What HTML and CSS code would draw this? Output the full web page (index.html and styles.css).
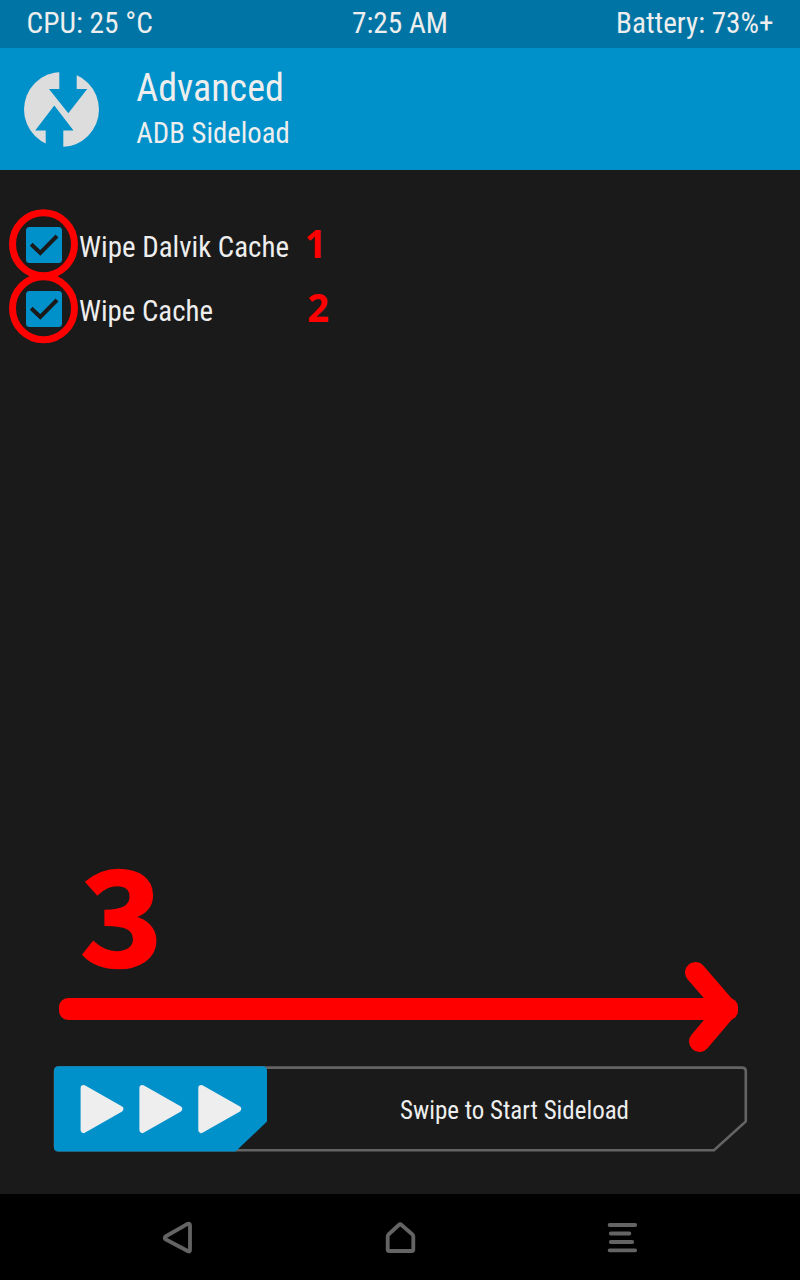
FILE: index.html
```html
<!DOCTYPE html>
<html lang="en">
<head>
<meta charset="utf-8">
<title>ADB Sideload</title>
<link rel="stylesheet" href="styles.css">
</head>
<body>
<div class="screen">
  <header class="status">
    <svg class="label" width="128" height="48"><text x="0.5" y="33" textLength="126.5" lengthAdjust="spacingAndGlyphs">CPU: 25 °C</text></svg>
    <svg class="label" width="97" height="48"><text x="0" y="33" textLength="96" lengthAdjust="spacingAndGlyphs">7:25 AM</text></svg>
    <svg class="label" width="158" height="48"><text x="0" y="33" textLength="157.5" lengthAdjust="spacingAndGlyphs">Battery: 73%+</text></svg>
  </header>
  <section class="title-bar">
    <svg class="logo" width="76" height="76" viewBox="24 71.7 76 76">
      <circle class="logo-disc" cx="61.5" cy="109.2" r="37.5"/>
      <path class="logo-cut" d="M59.3 70H76.7V88.6H87.2L68.3 113L49 88.6H59.3ZM54.3 105.3L73.5 130.2H63.3V149H45.7V130.2H35.2Z"/>
    </svg>
    <div class="titles">
      <svg class="label heading" width="160" height="50"><text x="0.3" y="42" textLength="147.5" lengthAdjust="spacingAndGlyphs">Advanced</text></svg>
      <svg class="label" width="160" height="50"><text x="0.3" y="34" textLength="153.5" lengthAdjust="spacingAndGlyphs">ADB Sideload</text></svg>
    </div>
  </section>
  <main class="content">
    <div class="option">
      <svg class="check" width="70" height="70" viewBox="0 0 70 70"><ellipse class="ring" cx="34.5" cy="35.2" rx="31" ry="31.5"/><rect class="box" x="17" y="18" width="36" height="36" rx="3.5"/><path class="tick" d="M22.2 35.3L31.3 44L48 27"/></svg>
      <svg class="label" width="212" height="64"><text x="0" y="44" textLength="210" lengthAdjust="spacingAndGlyphs">Wipe Dalvik Cache</text></svg>
      <svg class="step" width="30" height="64"><text x="-0.2" y="45" textLength="21.5" lengthAdjust="spacingAndGlyphs">1</text></svg>
    </div>
    <div class="option">
      <svg class="check" width="70" height="70" viewBox="0 0 70 70"><ellipse class="ring" cx="34.5" cy="35.2" rx="31" ry="31.5"/><rect class="box" x="17" y="18" width="36" height="36" rx="3.5"/><path class="tick" d="M22.2 35.3L31.3 44L48 27"/></svg>
      <svg class="label" width="212" height="64"><text x="0" y="44" textLength="134" lengthAdjust="spacingAndGlyphs">Wipe Cache</text></svg>
      <svg class="step" width="30" height="64"><text x="2.3" y="45" textLength="21.8" lengthAdjust="spacingAndGlyphs">2</text></svg>
    </div>
    <div class="guide">
      <svg class="step-large" width="100" height="112"><text x="2" y="107.5" textLength="83" lengthAdjust="spacingAndGlyphs">3</text></svg>
      <svg class="arrow" width="800" height="96" viewBox="0 960 800 96"><rect class="arrow-shaft" x="59" y="998" width="679" height="22" rx="9"/><path class="arrow-head" d="M695.5 972.5L727 1009L699.5 1041.5"/></svg>
    </div>
    <svg class="slider" width="800" height="90" viewBox="0 1064 800 90">
      <path class="track" d="M59 1067.6H742Q745.8 1067.6 745.8 1071.4V1121.5L714 1150.3H59Q55 1150.3 55 1146.3V1071.6Q55 1067.6 59 1067.6Z"/>
      <path class="thumb" d="M59 1066.3H262.5Q267 1066.3 267 1070.8V1121.5L235.5 1151.5H58.5Q54 1151.5 54 1147V1070.8Q54 1066.3 59 1066.3Z"/>
      <g class="chevrons"><path d="M83.7 1088.2L120.2 1109L83.7 1129.9Z"/><path d="M142.5 1088.2L179 1109L142.5 1129.9Z"/><path d="M201.4 1088.2L238 1109L201.4 1129.9Z"/></g>
      <text class="slider-label" x="400" y="1119" textLength="229" lengthAdjust="spacingAndGlyphs">Swipe to Start Sideload</text>
    </svg>
  </main>
  <nav class="nav">
    <svg width="32" height="36" viewBox="162 1220 32 36"><path d="M188 1223.7Q190 1223 190 1225.5V1250Q190 1252.3 187.7 1251L165.5 1239.2Q164 1238 165.5 1236.5Z"/></svg>
    <svg width="32" height="36" viewBox="384 1220 32 36"><path d="M398.8 1225L388.5 1234.5Q387.7 1235.3 387.7 1236.3V1249.5Q387.7 1251 389.2 1251H411.8Q413.3 1251 413.3 1249.5V1236.3Q413.3 1235.3 412.5 1234.5L401.5 1225Q400.2 1223.5 398.8 1225Z"/></svg>
    <svg width="32" height="36" viewBox="606 1220 32 36"><path d="M609.6 1225H635.2M610.8 1233.5H629.4M610.8 1242H632.2M609.6 1250.3H635.2"/></svg>
  </nav>
</div>
</body>
</html>
```
FILE: styles.css
```css
body { margin: 0; background: #1a1a1a; }
svg { display: block; flex: none; overflow: visible; }
.screen { width: 800px; height: 1280px; display: flex; flex-direction: column; overflow: hidden; }
.label, .slider-label { font-family: "Roboto Condensed", Roboto, sans-serif; font-stretch: 75%; font-weight: 400; font-size: 29px; fill: #eee; }
.status { height: 48px; flex: none; box-sizing: border-box; padding: 0 26px; display: grid; grid-template-columns: 1fr auto 1fr; background: #0074a4; }
.status svg:last-child { justify-self: end; }
.title-bar { height: 122px; flex: none; box-sizing: border-box; padding: 23.7px 24px 0; display: flex; gap: 36px; background: #0090ca; }
.logo { overflow: hidden; }
.logo-disc { fill: #ddd; }
.logo-cut { fill: #0090ca; }
.titles { margin-top: -12.7px; }
.heading { font-size: 39px; }
.content { height: 1024px; flex: none; box-sizing: border-box; padding-top: 43px; display: flex; flex-direction: column; }
.option { height: 64px; flex: none; display: flex; padding-left: 9px; }
.check { margin-top: -4px; }
.ring { fill: none; stroke: red; stroke-width: 7; }
.box { fill: #0090ca; }
.tick { fill: none; stroke: #1a1a1a; stroke-width: 4; }
.step { margin-left: 14px; fill: red; font: 700 40px "Open Sans", sans-serif; }
.step-large { margin-left: 78px; fill: red; stroke: red; stroke-width: 2.5; font: 700 130px "Noto Sans CJK SC", sans-serif; }
.guide { margin-top: 517px; }
.arrow { margin-top: -10px; }
.arrow-shaft { fill: red; }
.arrow-head { fill: none; stroke: red; stroke-width: 21; stroke-linecap: round; stroke-linejoin: round; }
.slider { margin-top: 8px; }
.track { fill: none; stroke: #646464; stroke-width: 2.6; }
.thumb { fill: #0090ca; }
.chevrons { fill: #eee; stroke: #eee; stroke-width: 6.2; stroke-linejoin: round; }
.slider-label { font-size: 25px; }
.nav { height: 86px; flex: none; box-sizing: border-box; padding: 26px 162px 0; display: flex; justify-content: space-between; background: #000; }
.nav path { fill: none; stroke: #646464; stroke-width: 3.8; stroke-linecap: round; stroke-linejoin: round; }
```
